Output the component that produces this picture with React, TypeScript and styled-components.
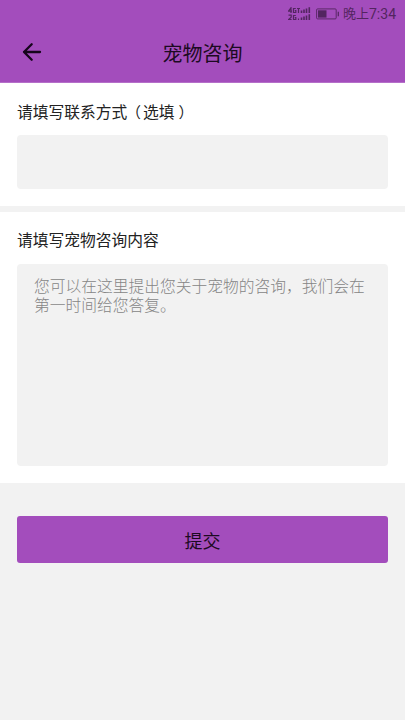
import React from "react";
import styled, { createGlobalStyle } from "styled-components";

const GlobalStyle = createGlobalStyle`
  * { box-sizing: border-box; }
  body {
    margin: 0;
    background: #f2f2f2;
    font-family: "Noto Sans CJK SC", sans-serif;
    color: #222;
  }
`;

const Screen = styled.div`
  display: flex;
  flex-direction: column;
  min-height: 720px;
  background: #f2f2f2;
`;

const Header = styled.header`
  height: 83px;
  background: #a34dbc;
  border-bottom: 1px solid #b56fc9;
`;

const StatusBar = styled.div`
  display: flex;
  align-items: center;
  justify-content: flex-end;
  height: 27px;
  padding-right: 9px;
  color: #532560;
`;

const Clock = styled.span`
  display: flex;
  font-family: Roboto, "Noto Sans CJK SC", sans-serif;
  font-weight: 400;
  font-size: 14px;
  line-height: 28px;
  margin-left: 3px;
  white-space: nowrap;
`;

const DayPart = styled.span`
  font-size: 13px;
`;

const Signal = styled.svg`
  margin-right: 5px;
`;

const NavBar = styled.div`
  display: grid;
  grid-template-columns: 100px 1fr 100px;
  align-items: center;
  height: 52px;
`;

const BackButton = styled.button`
  display: flex;
  width: 24px;
  height: 24px;
  margin: -2px 0 0 20px;
  padding: 0;
  border: 0;
  background: none;
  color: #16051c;
`;

const Title = styled.h1`
  margin: 0;
  text-align: center;
  font-size: 20px;
  line-height: 30px;
  font-weight: 400;
  color: #1c0a22;
`;

const Card = styled.section<{ $height: number; $gap?: number }>`
  height: ${(p) => p.$height}px;
  margin-bottom: ${(p) => p.$gap ?? 0}px;
  padding: 16px 17px 0;
  background: #fff;
`;

const Label = styled.label<{ $line: number }>`
  display: block;
  height: 36px;
  font-size: 15.75px;
  line-height: ${(p) => p.$line}px;
`;

const Paren = styled.span<{ $side: "open" | "close" }>`
  font-size: 15px;
  line-height: 1;
  margin: ${(p) => (p.$side === "open" ? "0 2px 0 -1.25px" : "0 0 0 4px")};
`;

const TextInput = styled.input`
  display: block;
  width: 100%;
  height: 54px;
  padding: 0 17px;
  border: 0;
  border-radius: 4px;
  background: #f2f2f2;
  font: inherit;
`;

const TextArea = styled.textarea`
  display: block;
  width: 100%;
  height: 202px;
  padding: 13px 17px;
  border: 0;
  border-radius: 4px;
  background: #f2f2f2;
  font-family: inherit;
  font-size: 15.75px;
  line-height: 18.5px;
  resize: none;
  overflow: hidden;
  &::placeholder { color: #858585; font-weight: 300; opacity: 1; }
`;

const SubmitButton = styled.button`
  height: 47px;
  margin: 33px 17px 0;
  padding: 0;
  border: 0;
  border-radius: 3px;
  background: #a34dbc;
  font-family: inherit;
  font-size: 18px;
  line-height: 26px;
  color: #1c0a22;
`;

const SignalIcon = () => (
  <Signal width="23" height="14" viewBox="0 0 23 14" fill="none" stroke="currentColor" strokeWidth="1.2">
    {[0, 7].map((y) => (
      <g key={y} transform={`translate(0 ${y})`}>
        <path
          d={y === 0 ? "M3 6V.8L.5 4.2H4M7.8 1.5H5.5V5.5H7.8V3.5H6.8" : "M.5 1.2H3.2V3.2L.5 5.5H3.6M7.8 1.5H5.5V5.5H7.8V3.5H6.8"}
        />
        <path d={y === 0 ? "M9 1.5H12M10.5 1.5V6" : "M10.5 4.5V6"} />
        <path d="M13.5 3.5V6M16 2.5V6M18.5 1.5V6M21.3 .3V6" strokeWidth="1.6" />
      </g>
    ))}
  </Signal>
);

const BatteryIcon = () => (
  <svg width="24" height="12" viewBox="0 0 24 12" fill="none" stroke="currentColor">
    <rect x=".6" y=".9" width="19.6" height="10" rx="1" strokeWidth=".9" />
    <rect x="2" y="2.3" width="8.5" height="7.3" fill="currentColor" stroke="none" />
    <path d="M22.3 3.7V8.2" strokeWidth="1.2" />
  </svg>
);

const ArrowIcon = () => (
  <svg width="24" height="24" viewBox="0 0 24 24" fill="none" stroke="currentColor" strokeWidth="2.3" strokeLinecap="round" strokeLinejoin="round">
    <path d="M20 12H4M11.7 4.3L4 12l7.7 7.7" />
  </svg>
);

export default function App() {
  return (
    <>
      <GlobalStyle />
      <Screen>
        <Header>
          <StatusBar>
            <SignalIcon />
            <BatteryIcon />
            <Clock><DayPart>晚上</DayPart>7:34</Clock>
          </StatusBar>
          <NavBar>
            <BackButton aria-label="返回">
              <ArrowIcon />
            </BackButton>
            <Title>宠物咨询</Title>
          </NavBar>
        </Header>
        <Card $height={123} $gap={6}>
          <Label $line={25} htmlFor="contact">
            请填写联系方式<Paren $side="open">（</Paren>选填<Paren $side="close">）</Paren>
          </Label>
          <TextInput id="contact" />
        </Card>
        <Card $height={271}>
          <Label $line={24} htmlFor="content">请填写宠物咨询内容</Label>
          <TextArea id="content" placeholder="您可以在这里提出您关于宠物的咨询，我们会在第一时间给您答复。" />
        </Card>
        <SubmitButton>提交</SubmitButton>
      </Screen>
    </>
  );
}
